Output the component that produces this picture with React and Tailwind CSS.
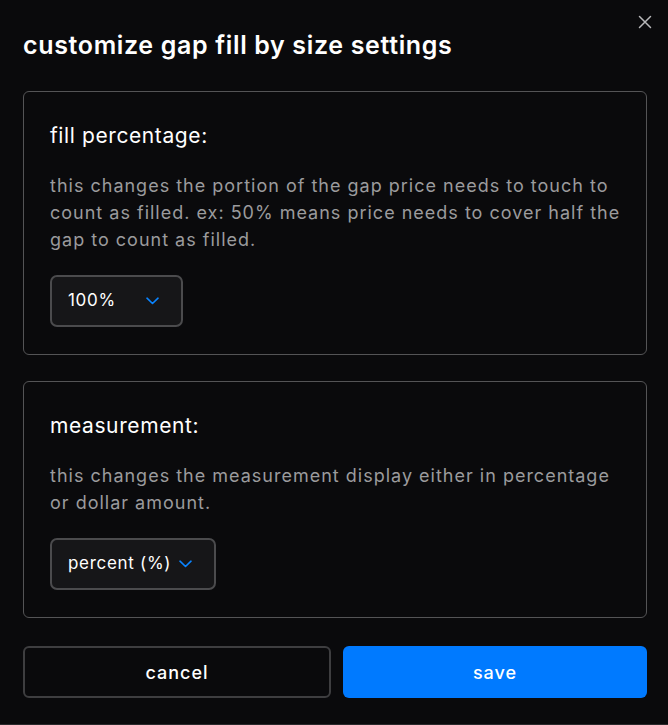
import React, { useState } from "react";

const Chevron = () => (
  <svg width="13" height="8" viewBox="0 0 13 8" fill="none" className="ml-auto shrink-0">
    <path d="M1 1.2l5.5 5.3 5.5-5.3" stroke="#0a84ff" strokeWidth="1.6" strokeLinecap="round" strokeLinejoin="round" />
  </svg>
);

const Select = ({ value, width }) => (
  <button
    className={`flex h-[52px] items-center gap-[4px] rounded-[7px] border-2 border-[#4b4b4d] bg-[#161618] pl-[16px] pr-[22px] text-[17px] tracking-[0.7px] text-white ${width}`}
  >
    <span className="whitespace-nowrap text-left">{value}</span>
    <Chevron />
  </button>
);

const Section = ({ title, text, children }) => (
  <div className="flex flex-col rounded-[6px] border border-[#545456] pl-[26px] pr-[18px] pt-[29px] pb-[27px]">
    <h3 className="text-[21px] leading-[30px] tracking-[0.6px] text-white">{title}</h3>
    <p className="mt-[21px] text-[18px] leading-[27px] tracking-[1px] text-[#9b9b9d]">{text}</p>
    <div className="mt-[22px]">{children}</div>
  </div>
);

export default function App() {
  const [fill] = useState("100%");
  const [measure] = useState("percent (%)");
  return (
    <div
      className="flex h-[725px] w-[668px] flex-col border-b border-[#2a2a2c] bg-[#0a0a0c] pl-[23px] pr-[21px] pt-[28px]"
      style={{ fontFamily: "Inter, 'Open Sans', sans-serif" }}
    >
      <div className="relative">
        <h2 className="text-[25px] font-semibold leading-[34px] tracking-[0.65px] text-white">
          customize gap fill by size settings
        </h2>
        <button className="absolute right-[-9px] top-[-17px] p-1 text-[#b8b8ba]">
          <svg width="14" height="14" viewBox="0 0 14 14" fill="none">
            <path d="M1.5 1.5l11 11M12.5 1.5l-11 11" stroke="currentColor" strokeWidth="1.5" strokeLinecap="round" />
          </svg>
        </button>
      </div>
      <div className="mt-[29px] flex flex-col gap-[26px]">
        <Section
          title="fill percentage:"
          text="this changes the portion of the gap price needs to touch to count as filled. ex: 50% means price needs to cover half the gap to count as filled."
        >
          <Select value={fill} width="w-[133px]" />
        </Section>
        <Section
          title="measurement:"
          text="this changes the measurement display either in percentage or dollar amount."
        >
          <Select value={measure} width="w-[166px]" />
        </Section>
      </div>
      <div className="mt-[28px] flex gap-[12px]">
        <button className="h-[52px] flex-1 rounded-[6px] border-2 border-[#3e3e40] text-[18px] font-medium tracking-[1px] text-white">
          cancel
        </button>
        <button className="h-[52px] flex-1 rounded-[6px] bg-[#007aff] text-[18px] font-medium tracking-[1px] text-white">
          save
        </button>
      </div>
    </div>
  );
}
